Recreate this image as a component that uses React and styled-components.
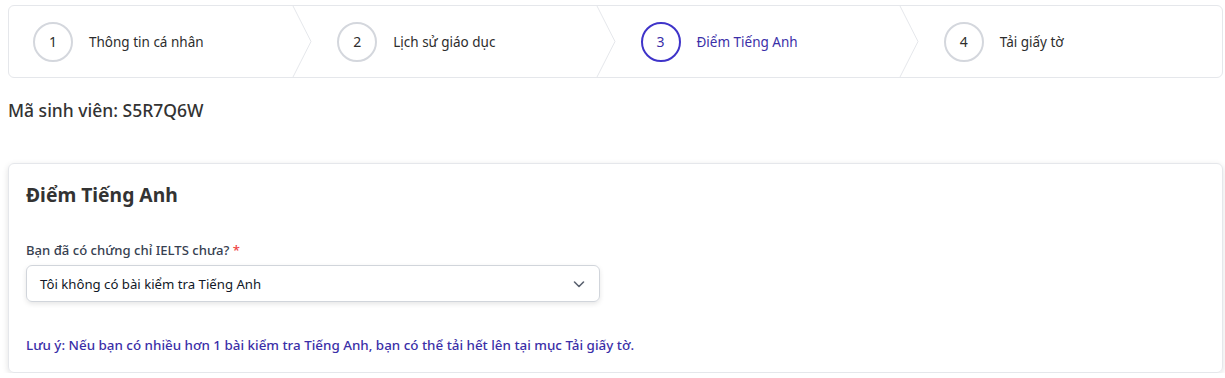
import React from "react";
import styled, { createGlobalStyle } from "styled-components";

const GlobalStyle = createGlobalStyle`
  body {
    margin: 0;
    background: #ffffff;
    font-family: "Noto Sans", "Open Sans", sans-serif;
    color: #333333;
  }
`;

const Page = styled.div`
  padding: 5px 2px 0 8px;
`;

const Stepper = styled.div`
  display: grid;
  grid-template-columns: repeat(4, 1fr);
  height: 73px;
  border: 1px solid #e5e7eb;
  border-radius: 6px;
  box-sizing: border-box;
  overflow: hidden;
`;

const Step = styled.div`
  position: relative;
  display: flex;
  align-items: center;
  gap: 16px;
  padding-left: ${(p) => (p.$first ? "24px" : "25px")};
`;

const Circle = styled.div`
  width: 40px;
  height: 40px;
  box-sizing: border-box;
  border-radius: 50%;
  border: 2px solid ${(p) => (p.$active ? "#3f34c9" : "#d4d7dd")};
  display: flex;
  align-items: center;
  justify-content: center;
  font-size: 14px;
  color: ${(p) => (p.$active ? "#3b2fa8" : "#2d2d2d")};
`;

const StepLabel = styled.span`
  font-size: 13.5px;
  color: ${(p) => (p.$active ? "#3b2fa8" : "#2d2d2d")};
`;

const Chevron = styled.svg`
  position: absolute;
  top: 0;
  right: 0;
  width: 20px;
  height: 100%;
`;

const StudentCode = styled.div`
  font-size: 17.5px;
  font-weight: 500;
  color: #333333;
  margin-top: 20px;
  line-height: 24px;
`;

const Card = styled.section`
  margin-top: 41px;
  border: 1px solid #e5e7eb;
  border-radius: 6px;
  box-shadow: 0 2px 6px rgba(0, 0, 0, 0.12);
  padding: 17px 17px 17px;
`;

const CardTitle = styled.h2`
  margin: 0;
  font-size: 19.3px;
  font-weight: 700;
  color: #333333;
  line-height: 28px;
`;

const Field = styled.div`
  margin-top: 31px;
  display: flex;
  flex-direction: column;
  gap: 5px;
  width: 574px;
`;

const Label = styled.label`
  font-size: 13.1px;
  font-weight: 500;
  color: #374151;
  line-height: 20px;
`;

const Required = styled.span`
  color: #ef4444;
`;

const Select = styled.div`
  height: 37px;
  box-sizing: border-box;
  border: 1px solid #d1d5db;
  border-radius: 6px;
  box-shadow: 0 2px 5px rgba(0, 0, 0, 0.1);
  display: flex;
  align-items: center;
  justify-content: space-between;
  padding: 0 10px 0 13px;
  font-size: 13.2px;
  color: #111827;
`;

const Note = styled.p`
  margin: 33px 0 0;
  font-size: 13.4px;
  font-weight: 500;
  color: #3b2fa8;
  line-height: 20px;
`;

const steps = ["Thông tin cá nhân", "Lịch sử giáo dục", "Điểm Tiếng Anh", "Tải giấy tờ"];

export default function App() {
  return (
    <>
      <GlobalStyle />
      <Page>
        <Stepper>
          {steps.map((s, i) => {
            const active = i === 2;
            return (
              <Step key={s} $first={i === 0}>
                <Circle $active={active}>{i + 1}</Circle>
                <StepLabel $active={active}>{s}</StepLabel>
                {i < steps.length - 1 && (
                  <Chevron viewBox="0 0 20 73" preserveAspectRatio="none">
                    <polyline points="1,0 19,36.5 1,73" fill="none" stroke="#e5e7eb" strokeWidth="1" />
                  </Chevron>
                )}
              </Step>
            );
          })}
        </Stepper>
        <StudentCode>Mã sinh viên: S5R7Q6W</StudentCode>
        <Card>
          <CardTitle>Điểm Tiếng Anh</CardTitle>
          <Field>
            <Label>
              Bạn đã có chứng chỉ IELTS chưa? <Required>*</Required>
            </Label>
            <Select>
              <span>Tôi không có bài kiểm tra Tiếng Anh</span>
              <svg width="20" height="20" viewBox="0 0 20 20" fill="none">
                <path d="M5.5 8l4.5 4.5 4.5-4.5" stroke="#5b6270" strokeWidth="1.6" strokeLinecap="round" strokeLinejoin="round" />
              </svg>
            </Select>
          </Field>
          <Note>Lưu ý: Nếu bạn có nhiều hơn 1 bài kiểm tra Tiếng Anh, bạn có thể tải hết lên tại mục Tải giấy tờ.</Note>
        </Card>
      </Page>
    </>
  );
}
